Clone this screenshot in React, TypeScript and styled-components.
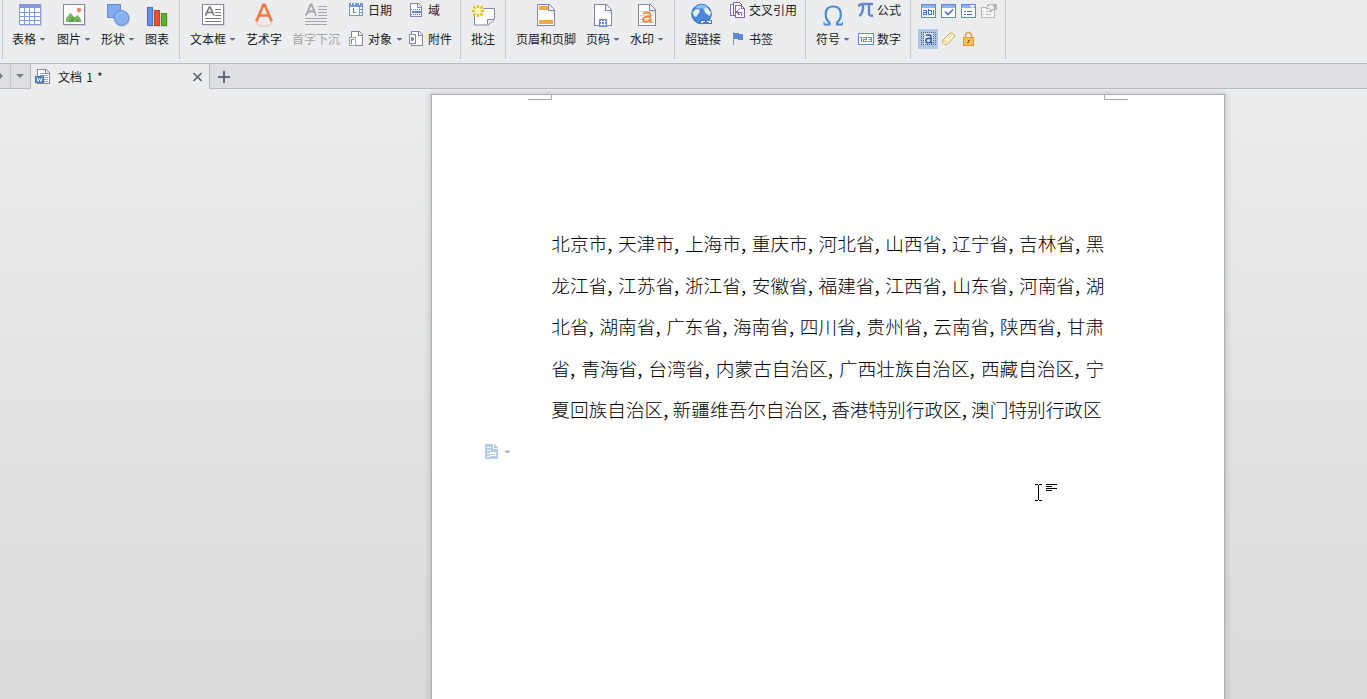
import React from "react";
import styled, { createGlobalStyle } from "styled-components";

const GlobalStyle = createGlobalStyle`
  * { box-sizing: border-box; }
  body {
    margin: 0;
    overflow: hidden;
    font: 12px/16px "Noto Sans CJK SC", sans-serif;
    color: #181c24;
  }
`;

const Window = styled.div`
  display: flex;
  flex-direction: column;
  height: 100vh;
  min-width: 1367px;
  overflow: hidden;
`;

const Ribbon = styled.div`
  display: flex;
  flex: none;
  height: 64px;
  padding-left: 2px;
  background: #ecedef;
  border-bottom: 1px solid #b7bac2;
`;

const Group = styled.section<{ $width: number; $last?: boolean }>`
  display: flex;
  flex: none;
  width: ${(p) => p.$width}px;
  height: 59px;
  border-left: 1px solid #c6c8d0;
  border-right: ${(p) => (p.$last ? "1px solid #c6c8d0" : "0")};
`;

const LargeButton = styled.div<{ $left: number; $width: number; $disabled?: boolean }>`
  flex: none;
  margin-left: ${(p) => p.$left}px;
  width: ${(p) => p.$width}px;
  color: ${(p) => (p.$disabled ? "#a3a5aa" : "inherit")};
`;

const IconSlot = styled.div<{ $inset: number }>`
  height: 31px;
  padding: 3px 0 0 ${(p) => p.$inset}px;
  svg { display: block; overflow: visible; }
`;

const Label = styled.div`
  display: flex;
  align-items: center;
  gap: 4px;
  height: 16px;
  white-space: nowrap;
`;

const Caret = styled.i<{ $color?: string }>`
  width: 5px;
  height: 3px;
  background: ${(p) => p.$color || "#646c8b"};
  clip-path: polygon(0 0, 100% 0, 100% 1px, 3px 3px, 2px 3px, 0 1px);
`;

const Stack = styled.div<{ $left: number; $width: number }>`
  display: flex;
  flex: none;
  flex-direction: column;
  gap: 13px;
  margin-left: ${(p) => p.$left}px;
  width: ${(p) => p.$width}px;
  padding-top: 2px;
`;

const SmallButton = styled.div`
  display: flex;
  align-items: center;
  height: 16px;
  white-space: nowrap;
  svg { flex: none; display: block; margin-right: 3px; overflow: visible; }
  i { margin-left: 5px; }
`;

const ToolGrid = styled.div`
  display: grid;
  grid-template-columns: repeat(4, 20px);
  grid-template-rows: 20px 20px;
  row-gap: 8px;
  margin: 1px 0 0 7px;
`;

const Tool = styled.div<{ $active?: boolean }>`
  display: flex;
  align-items: center;
  justify-content: flex-end;
  width: 20px;
  height: 20px;
  padding-right: 1px;
  background: ${(p) => (p.$active ? "#b1c7e8" : "transparent")};
  svg { display: block; }
`;

const TabBar = styled.nav`
  display: flex;
  flex: none;
  height: 25px;
  background: #dedfe3;
`;

const TabScroll = styled.div<{ $width: number; $line: string }>`
  display: flex;
  align-items: center;
  justify-content: center;
  width: ${(p) => p.$width}px;
  border-right: 1px solid ${(p) => p.$line};
  border-bottom: 1px solid #b7bac2;
`;

const TabCaret = styled.i<{ $right?: boolean }>`
  width: 0;
  height: 0;
  border: 4px solid transparent;
  ${(p) =>
    p.$right
      ? "border-left-color:#747985;border-right:0;margin-right:8px;"
      : "border-top-color:#7c7f87;border-bottom:0;margin-right:1px;"}
`;

const Tab = styled.div`
  display: flex;
  align-items: center;
  width: 179px;
  padding: 1px 7px 0 4px;
  background: #ecedef;
  border-right: 1px solid #b7bac2;
  svg { flex: none; }
`;

const TabTitle = styled.span`
  flex: 1;
  padding-left: 7px;
  white-space: pre;
  word-spacing: 1.5px;
`;

const TabRest = styled.div`
  flex: 1;
  padding: 7px 0 0 8px;
  border-bottom: 1px solid #b7bac2;
  svg { display: block; }
`;

const Workspace = styled.main`
  flex: 1;
  min-height: 0;
  padding: 5px 0 0 431px;
  overflow: hidden;
  background: linear-gradient(#ecedef, #e4e5e7 40%, #e0e0e2 65%, #dbdbdd);
`;

const Page = styled.article`
  width: 794px;
  height: 1123px;
  background: #fff;
  border: 1px solid #aeb0b9;
  box-shadow: 0 0 6px 1px rgba(70, 72, 84, 0.24);
`;

const Margins = styled.div`
  display: flex;
  justify-content: space-between;
  height: 5px;
  padding: 0 96px;
`;

const Corner = styled.div<{ $side: "left" | "right" }>`
  width: 24px;
  border-bottom: 1px solid #a8a8a8;
  border-${(p) => (p.$side === "left" ? "right" : "left")}: 1px solid #a8a8a8;
`;

const Body = styled.div`
  padding: 122px 0 0 119.3px;
  font-family: "Noto Sans CJK SC", sans-serif;
  font-size: 18.667px;
  font-weight: 300;
  line-height: 41.6px;
  color: #000;
`;

const Line = styled.div<{ $comma: number }>`
  height: 41.6px;
  white-space: nowrap;
  b {
    display: inline-block;
    width: ${(p) => p.$comma}px;
    font-weight: 400;
  }
`;

const PasteTag = styled.div`
  display: flex;
  align-items: center;
  gap: 7px;
  margin: 14px 0 0 53px;
  height: 16px;
`;

const Pointer = styled.svg`
  position: absolute;
  left: 1034px;
  top: 483px;
`;

type ArtProps = { w?: number; h?: number; smooth?: boolean; children: React.ReactNode };
const Art = ({ w = 24, h = 24, smooth, children }: ArtProps) => (
  <svg width={w} height={h} viewBox={`0 0 ${w} ${h}`} fill="none" shapeRendering={smooth ? "auto" : "crispEdges"}>
    {children}
  </svg>
);

const Sheet = ({ w = 18, h = 22 }: { w?: number; h?: number }) => {
  const f = w > 15 ? 6 : 4;
  return (
    <>
      <path d={`M.5 .5H${w - f}L${w - 0.5} ${f}V${h - 0.5}H.5Z`} fill="#fff" stroke="#8a85a2" />
      <path d={`M${w - f - 0.5} .5V${f + 0.5}H${w}`} stroke="#8a85a2" fill="#eef0fc" />
      {w > 15 && <path d={`M${w - f} ${f + 1}h5v5z`} fill="#e2e6fb" />}
    </>
  );
};

const TableIcon = () => (
  <Art>
    <path d="M1 2h22v21H1z" fill="#d3d5da" />
    <path d="M0 1h22v21H0z" fill="#7f9bd9" />
    {[5, 10, 14, 18].map((y, r) =>
      [1, 6, 11, 16].map((x) => <rect key={`${x}-${y}`} x={x} y={y} width={x === 16 ? 5 : 4} height={r === 0 ? 4 : 3} fill="#fff" />)
    )}
  </Art>
);

const PictureIcon = () => (
  <Art>
    <path d="M1 2h22v21H1z" fill="#d3d5da" />
    <path d="M.5 1.500h21v20H.5z" fill="#fff" stroke="#8d83a2" />
    <g shapeRendering="auto">
      <circle cx="16" cy="7" r="2.300" fill="#f48458" />
      <path d="M3 19v-4l2-2 2-3 2 1 2 4 2-2 2-1 2 3 2 4z" fill="#79bb60" />
      <path d="M5 19l5-6 2 2-2 4zm7 0l3-4 2 4z" fill="#5fa64c" />
    </g>
  </Art>
);

const ShapesIcon = () => (
  <Art smooth>
    <path d="M.5 1.500h13v13H.5z" fill="#83aaf0" stroke="#6489cc" />
    <circle cx="15" cy="16" r="8" fill="#cfd2d8" />
    <circle cx="14.500" cy="15" r="7.400" fill="#85b1f2" stroke="#5d8bce" />
    <path d="M9 13.500c1-3 4-4.500 7-3.500" stroke="#a9caf8" />
  </Art>
);

const ChartIcon = () => (
  <Art>
    <path d="M2 5h5v19H2zm7 3h5v16H9zm7 3h5v13h-5z" fill="#d5d7db" />
    <path d="M.5 4.500h5v18h-5z" fill="#638fe5" stroke="#4974c4" />
    <path d="M7.500 7.500h5v15h-5z" fill="#f04f2e" stroke="#c43e24" />
    <path d="M14.500 10.500h5v12h-5z" fill="#5bb52b" stroke="#43921f" />
  </Art>
);

const TextBoxIcon = ({ framed = true, color = "#77787e" }: { framed?: boolean; color?: string }) => (
  <Art>
    {framed && (
      <>
        <path d="M1 2h22v21H1z" fill="#d3d5da" />
        <path d="M.5 1.500h21v20H.5z" fill="#fff" stroke="#8d83a2" />
      </>
    )}
    {framed ? (
      <>
        <path d="M13 6.500h6M13 9.500h6M13 12.500h6M3 15.500h16M3 18.500h16" stroke={color} />
        <path d="M3.500 12.500L7.300 4h.8L12 12.500M5 9.500h5.500" stroke={color} strokeWidth="1.700" shapeRendering="auto" />
      </>
    ) : (
      <>
        <path d="M13 3.500h9M13 6.500h9M13 9.500h9M13 12.500h9M0 15.500h22M0 18.500h22M0 21.500h22" stroke={color} />
        <path d="M1 12.500L5.700 1.500h.8L11 12.500M3 8.500h6.500" stroke={color} strokeWidth="1.900" shapeRendering="auto" />
      </>
    )}
  </Art>
);

const WordArtIcon = () => (
  <Art w={18} smooth>
    <path d="M1.300 18.500L8.300 1.800h1.400l7 16.700M4 12.500h10" stroke="#f97945" strokeWidth="2.700" />
    <path d="M1.500 19.500c2 5 13 5 15 0" stroke="#f8b99f" strokeWidth="1.500" opacity=".65" />
  </Art>
);

const CommentIcon = () => (
  <Art smooth>
    <path d="M2.500 5.500h20v11l-6.500 5.500H2.500z" fill="#fff" stroke="#8984a1" />
    <path d="M15.500 21.500v-5h6.500" fill="#e8eafa" stroke="#8984a1" />
    <circle cx="6" cy="8" r="6" fill="#f4efcf" />
    <path d="M6 2v3M6 11v3M0 8h3M9 8h3M1.500 3.500l2 2M8.500 10.500l2 2M10.500 3.500l-2 2M3.500 10.500l-2 2" stroke="#e8bb20" strokeWidth="2" />
    <circle cx="6" cy="8" r="3" fill="#fff8b8" />
  </Art>
);

const HeaderFooterIcon = () => (
  <Art w={18}>
    <g transform="translate(0 1)"><Sheet /><path d="M2 2h9v4H2zM2 16h14v4H2z" fill="#f1a743" /></g>
  </Art>
);
const PageNumberIcon = () => (
  <Art w={18}>
    <g transform="translate(0 1)"><Sheet /></g>
    <path d="M5 16h8v8H5z" fill="#6489dd" />
    <path d="M7.500 17v6M10.500 17v6M6 18.500h6M6 21.500h6" stroke="#fff" />
  </Art>
);
const WatermarkIcon = () => (
  <Art w={18}>
    <g transform="translate(0 1)"><Sheet /></g>
    <path d="M2 8.500h10M2 12.500h14M2 16.500h14M2 19.500h14" stroke="#d2d3dc" />
    <path d="M5.300 11C6 9.200 12.300 8.500 12.300 12V18.500H14M12.200 13.500C8 13.500 5 14 5 16.500C5 19.500 10 19.500 12.200 16.500" stroke="#ef8a43" strokeWidth="1.900" shapeRendering="auto" />
  </Art>
);

const LinkIcon = () => (
  <Art smooth>
    <circle cx="10.500" cy="11" r="9.800" fill="#4d88d8" stroke="#3b74c6" />
    <path d="M4 4q6.500-5 13 0l-4 2-2.500-1L7.500 6z" fill="#8cc1f8" />
    <path d="M1.500 9.500L5 6l4 1-1 3-3 4-2-1zM12.500 6L16 4.500l4 5-1.500 3.500-4-3z" fill="#e4f1ff" />
    <path d="M9.500 17.500h5v3h-5zM15.500 17.500h5v3h-5z" fill="#fff" stroke="#4778c4" shapeRendering="crispEdges" />
    <path d="M12 19h6" stroke="#4778c4" shapeRendering="crispEdges" />
  </Art>
);

const OmegaIcon = () => (
  <Art w={21} smooth>
    <path d="M1 21.500H6.500V19.500C1 15 .8 3.500 10.200 3.500S19.500 15 14 19.500V21.500H19.500" stroke="#498bd7" strokeWidth="2.200" />
    <path d="M1 22v-3M19.500 22v-3" stroke="#498bd7" />
  </Art>
);

const DateIcon = () => (
  <Art w={16} h={16}>
    <path d="M0 1h14v13H0z" fill="#7595df" />
    <path d="M1 5h9v8H1zM11 5h2v2h-2zm0 3h2v2h-2zm0 3h2v2h-2z" fill="#fff" />
    <path d="M2 1h1v2H2zm3 0h1v2H5zm5 0h1v2h-1z" fill="#fff" />
    <path d="M4.500 6v4.500H7" stroke="#5378c8" />
  </Art>
);
const ObjectIcon = () => (
  <Art w={16} h={16}>
    <g transform="translate(2 0)"><Sheet w={12} h={15} /></g>
    <path d="M.5 6.500h6v8h-6z" fill="#fff" stroke="#a4a5b2" />
    <path d="M2 8h1v5H2zM3 8h2v1H3z" fill="#4eb63c" />
  </Art>
);
const FieldIcon = () => (
  <Art w={16} h={16}>
    <g transform="translate(1 1)"><Sheet w={12} h={14} /></g>
    <path d="M2 7h10v7H2z" fill="#eef3ff" />
    <path d="M2 7.500h11M2 12.500h11" stroke="#6283cf" strokeDasharray="1 1" />
    <path d="M3 10h9" stroke="#6283cf" strokeWidth="2" />
  </Art>
);
const AttachmentIcon = () => (
  <Art w={16} h={16}>
    <g transform="translate(2 0)"><Sheet w={12} h={15} /></g>
    <path d="M.5 3.500h6v9h-6z" fill="#fff" stroke="#8a85a2" />
    <path d="M2 6h1l2 2-2 2H2z" fill="#8580a0" />
  </Art>
);
const CrossRefIcon = () => (
  <Art w={16} h={16}>
    <path d="M.5 2.500h6v11h-6z" fill="#fff" stroke="#906dbb" />
    <path d="M3.500 .5h6l2 2v11h-8z" fill="#fff" stroke="#8462ae" />
    <path d="M5.500 3.500h6l3 3v9h-9z" fill="#fff" stroke="#8462ae" />
    <path d="M11.500 3.500v3h3M9.500 6.500l-3 3.500 3 3M7 10.500h4v3" stroke="#906dbb" />
  </Art>
);
const BookmarkIcon = () => (
  <Art w={16} h={16}>
    <path d="M3 1h1v13H3z" fill="#8992b2" />
    <path d="M4 2h5v1h4v6H8V8H4z" fill="#5c89dd" />
  </Art>
);
const PiIcon = () => (
  <Art w={16} h={16} smooth>
    <path d="M.5 4.500q1-2.500 4-2.500h10.500M5 2.500q.5 8-3.500 11.500M11 2.500v9q.5 3 4 2" stroke="#6288d0" strokeWidth="2.400" />
  </Art>
);
const NumberIcon = () => (
  <Art w={16} h={16}>
    <path d="M.5 2.500h15v11H.5z" fill="#fff" stroke="#6789dc" />
    <path d="M3.500 6v5M2 6.500h1M5 6.500h3.500v2H5.500v2H9M10 6.500h3.500v4H10M11 8.500h2" stroke="#6789dc" />
  </Art>
);

const FormFrame = ({ color = "#638ad9", children }: { color?: string; children: React.ReactNode }) => (
  <Art w={16} h={16}>
    <path d="M.5 1.500h14v13H.5z" fill="#fff" stroke={color} />
    <path d="M1 2h13v3H1z" fill="#92b1ef" />
    {children}
  </Art>
);
const TextFieldIcon = () => (
  <FormFrame><path d="M2 7.500h3.500v4H2.500v-2h3M7.500 6v5.500h3v-4H8M12.500 7v5" stroke="#4270cd" /></FormFrame>
);
const CheckFieldIcon = () => (
  <FormFrame><path d="M4 8.500l3 3 5-5" stroke="#4270cd" strokeWidth="1.600" shapeRendering="auto" /></FormFrame>
);
const ListFieldIcon = () => (
  <FormFrame><path d="M9 2h5l-2 3h-1z" fill="#fff" /><path d="M3 8.500h2m1 0h5M3 11.500h2m1 0h5" stroke="#4270cd" /></FormFrame>
);
const OptionsIcon = () => (
  <Art w={16} h={16}>
    <path d="M.5 4.500h13v10H.5z" fill="#f6f6f6" stroke="#b8b9bc" />
    <path d="M2 8.500h1m2 0h5M2 11.500h1m2 0h5" stroke="#bbbcbf" />
    <path d="M5 5l3-3.500h7v5h-3l-2 2-1-2z" fill="#ececec" stroke="#b5b5b8" />
    <path d="M12 1h3v5h-2z" fill="#b5b5b8" />
  </Art>
);
const ShadingIcon = () => (
  <Art w={16} h={16}>
    {[1, 3, 5, 7, 9, 11, 13].map((y) => <path key={y} d={`M0 ${y + 0.5}h15`} stroke="#59616f" strokeDasharray="1 1" />)}
    <path d="M3 2h9v11H3z" fill="#dce9fc" />
    <path d="M5 4h3.500q1.500 0 1.500 2v6M10 7.500H7q-2 0-2 2.200T7 12q2 0 3-2M9.500 12h2" stroke="#2856ae" strokeWidth="1.600" shapeRendering="auto" />
  </Art>
);
const EraserIcon = () => (
  <Art w={16} h={16} smooth>
    <path d="M1.500 9.500L9 2q2-1 4.500 2 .5 1 0 2L6 13.500q-2 .5-3.500-1t-1-3z" fill="#fff4cf" stroke="#dfa347" />
    <path d="M2 9.500q3 0 4.500 3.500" stroke="#edbf79" />
  </Art>
);
const LockIcon = () => (
  <Art w={16} h={16}>
    <path d="M4.500 7V3.500l2-2h2l2 2V7" stroke="#dda047" strokeWidth="1.600" shapeRendering="auto" />
    <path d="M2.500 6.500h10v8h-10z" fill="#fbbf4d" stroke="#dc963d" />
    <path d="M9 9.500H7.500v2H6" stroke="#a36829" />
  </Art>
);

const WordFileIcon = () => (
  <Art w={16} h={16}>
    <g transform="translate(2 0)"><Sheet w={13} h={15} /></g>
    <path d="M5 4.500h5M5 6.500h8M9 8.500h4M9 10.500h4M9 12.500h4" stroke="#9ca4b7" />
    <path d="M0 7h9v7H0z" fill="#4778bd" />
    <path d="M2 8.500l1 4 1.500-3 1.500 3 1-4" stroke="#fff" shapeRendering="auto" />
  </Art>
);

const Large = ({ icon, label, left, width, inset, caret, disabled }: {
  icon: React.ReactNode; label: string; left: number; width: number; inset: number; caret?: boolean; disabled?: boolean;
}) => (
  <LargeButton $left={left} $width={width} $disabled={disabled}>
    <IconSlot $inset={inset}>{icon}</IconSlot>
    <Label>{label}{caret && <Caret />}</Label>
  </LargeButton>
);

const LINES: { text: string; comma: number }[] = [
  { text: "北京市,天津市,上海市,重庆市,河北省,山西省,辽宁省,吉林省,黑", comma: 10.85 },
  { text: "龙江省,江苏省,浙江省,安徽省,福建省,江西省,山东省,河南省,湖", comma: 10.85 },
  { text: "北省,湖南省,广东省,海南省,四川省,贵州省,云南省,陕西省,甘肃", comma: 10.8 },
  { text: "省,青海省,台湾省,内蒙古自治区,广西壮族自治区,西藏自治区,宁", comma: 11.3 },
  { text: "夏回族自治区,新疆维吾尔自治区,香港特别行政区,澳门特别行政区", comma: 9.333 },
];

export default function App() {
  return (
    <Window>
      <GlobalStyle />
      <Ribbon>
        <Group $width={177}>
          <Large icon={<TableIcon />} label="表格" left={9} width={34} inset={7} caret />
          <Large icon={<PictureIcon />} label="图片" left={11} width={34} inset={6} caret />
          <Large icon={<ShapesIcon />} label="形状" left={10} width={34} inset={6} caret />
          <Large icon={<ChartIcon />} label="图表" left={10} width={24} inset={2} />
        </Group>
        <Group $width={281}>
          <Large icon={<TextBoxIcon />} label="文本框" left={10} width={46} inset={12} caret />
          <Large icon={<WordArtIcon />} label="艺术字" left={10} width={36} inset={9} />
          <Large icon={<TextBoxIcon framed={false} color="#a5a6aa" />} label="首字下沉" left={10} width={48} inset={13} disabled />
          <Stack $left={9} $width={61}>
            <SmallButton><DateIcon />日期</SmallButton>
            <SmallButton><ObjectIcon />对象<Caret /></SmallButton>
          </Stack>
          <Stack $left={-1} $width={46}>
            <SmallButton><FieldIcon />域</SmallButton>
            <SmallButton><AttachmentIcon />附件</SmallButton>
          </Stack>
        </Group>
        <Group $width={45}>
          <Large icon={<CommentIcon />} label="批注" left={10} width={24} inset={1} />
        </Group>
        <Group $width={169}>
          <Large icon={<HeaderFooterIcon />} label="页眉和页脚" left={10} width={60} inset={21} />
          <Large icon={<PageNumberIcon />} label="页码" left={10} width={34} inset={8} caret />
          <Large icon={<WatermarkIcon />} label="水印" left={10} width={34} inset={8} caret />
        </Group>
        <Group $width={131}>
          <Large icon={<LinkIcon />} label="超链接" left={10} width={36} inset={6} />
          <Stack $left={9} $width={68}>
            <SmallButton><CrossRefIcon />交叉引用</SmallButton>
            <SmallButton><BookmarkIcon />书签</SmallButton>
          </Stack>
        </Group>
        <Group $width={105}>
          <Large icon={<OmegaIcon />} label="符号" left={10} width={34} inset={7} caret />
          <Stack $left={8} $width={46}>
            <SmallButton><PiIcon />公式</SmallButton>
            <SmallButton><NumberIcon />数字</SmallButton>
          </Stack>
        </Group>
        <Group $width={96} $last>
          <ToolGrid>
            <Tool><TextFieldIcon /></Tool>
            <Tool><CheckFieldIcon /></Tool>
            <Tool><ListFieldIcon /></Tool>
            <Tool><OptionsIcon /></Tool>
            <Tool $active><ShadingIcon /></Tool>
            <Tool><EraserIcon /></Tool>
            <Tool><LockIcon /></Tool>
          </ToolGrid>
        </Group>
      </Ribbon>
      <TabBar>
        <TabScroll $width={11} $line="#c3c5cb"><TabCaret $right /></TabScroll>
        <TabScroll $width={20} $line="#b7bac2"><TabCaret /></TabScroll>
        <Tab>
          <WordFileIcon />
          <TabTitle>文档 1 *</TabTitle>
          <Art w={10} h={10} smooth><path d="M1.500 1l8 8M9.500 1l-8 8" stroke="#5a6276" strokeWidth="1.600" /></Art>
        </Tab>
        <TabRest>
          <Art w={13} h={13}><path d="M5 0h2v12H5zM0 5h12v2H0z" fill="#606980" /></Art>
        </TabRest>
      </TabBar>
      <Workspace>
        <Page>
          <Margins><Corner $side="left" /><Corner $side="right" /></Margins>
          <Body>
            {LINES.map((line) => (
              <Line key={line.text} $comma={line.comma}>
                {line.text.split(",").map((part, i) => (
                  <React.Fragment key={i}>{i > 0 && <b>,</b>}{part}</React.Fragment>
                ))}
              </Line>
            ))}
          </Body>
          <PasteTag>
            <Art w={13} h={15}>
              <path d="M0 0h8v5h5v10H0zM9 0l4 4H9z" fill="#b9cbea" />
              <path d="M2 3.500h4M2 6.500h4M2 9.500h9M2 12.500h3" stroke="#fff" />
              <path d="M5.500 8.500h5v3h-5z" stroke="#fff" />
            </Art>
            <Caret $color="#adb5c6" />
          </PasteTag>
        </Page>
      </Workspace>
      <Pointer width="24" height="20" viewBox="0 0 24 20" fill="none" stroke="#000" shapeRendering="crispEdges">
        <path d="M1 1.500h3m1 0h3M1 17.500h3m1 0h3M4.500 2v15M12 1.500h11M12 3.500h6M12 5.500h11M12 7.500h6" />
      </Pointer>
    </Window>
  );
}
